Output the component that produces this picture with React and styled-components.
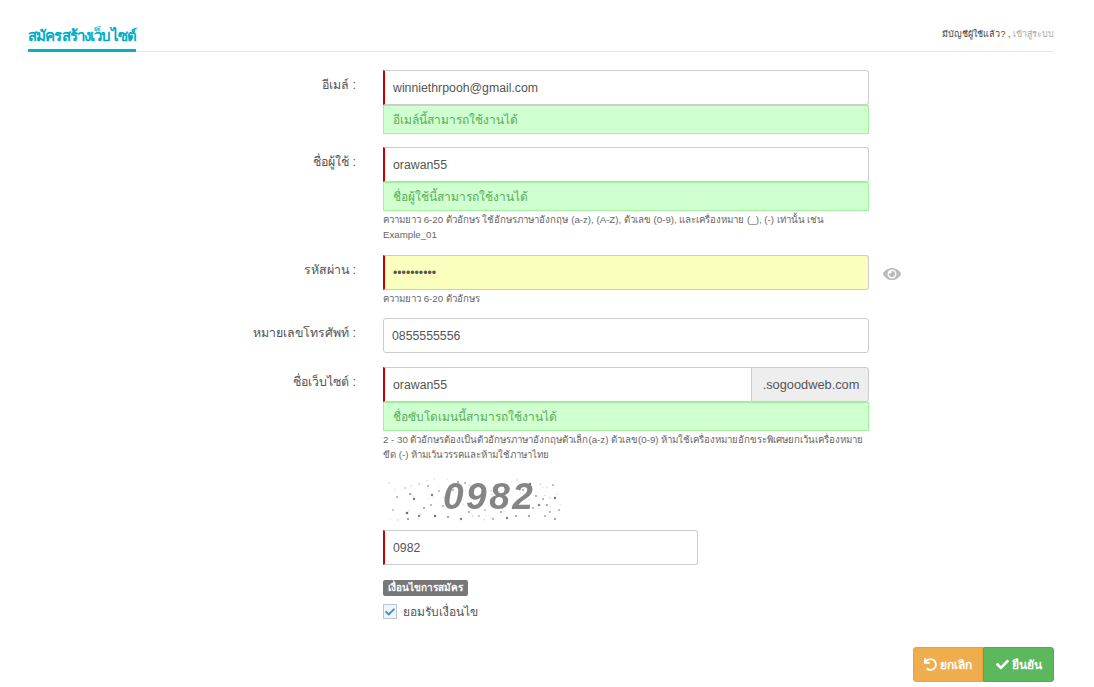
import React from "react";
import styled, { createGlobalStyle } from "styled-components";
import { FaEye, FaCheck, FaUndo } from "react-icons/fa";

const THAI = `"Liberation Sans", "Noto Sans", "DejaVu Sans", sans-serif`;

const Global = createGlobalStyle`
	* { box-sizing: border-box; }
	html, body { margin: 0; padding: 0; background: #fff; }
	body { font-family: ${THAI}; color: #555; }
`;

const Page = styled.div`
	width: 1094px;
	height: 687px;
	padding: 0 40px 0 28px;
	overflow: hidden;
`;

const Header = styled.div`
	height: 52px;
	display: flex;
	justify-content: space-between;
	align-items: flex-end;
	border-bottom: 1px solid #e6e6e6;
`;

const Title = styled.div`
	height: 31px;
	width: 108px;
	margin-bottom: -1px;
	padding-top: 5px;
	border-bottom: 3px solid #00b3cc;
	color: #00adc8;
	font-size: 15px;
	font-weight: 600;
	letter-spacing: -0.86px;
	line-height: 20px;
	white-space: nowrap;
`;

const LoginHint = styled.div`
	font-size: 9px;
	line-height: 12px;
	margin-bottom: 11px;
	color: #444;
`;

const LoginLink = styled.span`
	color: #a8a8a8;
`;

const Form = styled.div`
	padding-top: 18px;
`;

const Row = styled.div`
	display: grid;
	grid-template-columns: 328px 486px;
	column-gap: 27px;
	margin-bottom: ${(p) => p.$gap ?? 13}px;
`;

const Label = styled.div`
	text-align: right;
	font-size: 12.4px;
	line-height: 16px;
	padding-top: 7px;
	color: #555;
`;

const Field = styled.div`
	position: relative;
	display: flex;
	flex-direction: column;
`;

const InputGroup = styled.div`
	display: flex;
	width: ${(p) => p.$width ?? 486}px;
	height: 35px;
`;

const Input = styled.div`
	flex: 1;
	height: 35px;
	padding: 0 8px;
	display: flex;
	align-items: center;
	font-size: 12.3px;
	color: #555;
	background: ${(p) => (p.$yellow ? "#faffbd" : "#fff")};
	border: 1px solid #ccc;
	border-left: ${(p) => (p.$required ? "2px solid #c80000" : "1px solid #ccc")};
	border-radius: ${(p) => (p.$addon ? "0" : "0 3px 3px 0")};
	border-top-left-radius: ${(p) => (p.$required ? "0" : "3px")};
	border-bottom-left-radius: ${(p) => (p.$required ? "0" : "3px")};
	border-right-width: ${(p) => (p.$addon ? 0 : 1)}px;
`;

const Addon = styled.div`
	width: 118px;
	height: 35px;
	padding-left: 2px;
	display: flex;
	align-items: center;
	justify-content: center;
	font-size: 12.8px;
	color: #555;
	background: #eee;
	border: 1px solid #ccc;
	border-radius: 0 3px 3px 0;
`;

const Success = styled.div`
	height: 29px;
	padding: 0 9px;
	display: flex;
	align-items: center;
	font-size: 12px;
	color: #5aad5a;
	background: #d0ffd0;
	border: 1px solid #a0f0a0;
`;

const Help = styled.div`
	margin-top: ${(p) => p.$top ?? 1}px;
	font-size: 9.7px;
	line-height: 15px;
	color: #666;
`;

const EyeButton = styled.div`
	position: absolute;
	left: 500px;
	top: 10px;
	color: #bbb;
	font-size: 18px;
	line-height: 0;
`;

const Captcha = styled.svg`
	display: block;
	width: 180px;
	height: 50px;
	margin-top: 10px;
	margin-bottom: 8px;
	filter: blur(0.6px);
`;

const Badge = styled.div`
	align-self: flex-start;
	height: 16px;
	margin-top: 15px;
	padding: 0 5px;
	border-radius: 2px;
	background: #777;
	color: #fff;
	font-size: 10px;
	font-weight: 700;
	line-height: 16px;
`;

const CheckRow = styled.div`
	display: flex;
	align-items: center;
	gap: 6px;
	margin-top: 6px;
	font-size: 12px;
	color: #555;
`;

const CheckBox = styled.span`
	width: 14px;
	height: 15px;
	display: flex;
	align-items: center;
	justify-content: center;
	background: #f1f4f7;
	border: 1px solid #bcc6d0;
	color: #3f97c9;
	font-size: 10px;
`;

const Actions = styled.div`
	display: flex;
	justify-content: flex-end;
	margin-top: 26px;
`;

const Button = styled.div`
	width: ${(p) => p.$width}px;
	height: 35px;
	display: flex;
	align-items: center;
	justify-content: center;
	gap: 3px;
	font-size: 12px;
	font-weight: 700;
	color: #fff;
	background: ${(p) => p.$bg};
	border: 1px solid ${(p) => p.$border};
	border-radius: ${(p) => p.$radius};

	svg {
		font-size: 13px;
	}
`;

// noise specks for the captcha picture: x, y, radius, grey
const specks = [
	[14, 25, 1, 170], [22, 16, 1, 200], [27, 22, 1, 150], [31, 27, 1.2, 120], [10, 38, 1, 190],
	[24, 41, 1.3, 110], [25, 47, 1, 140], [36, 44, 1.2, 130], [41, 36, 1, 150], [48, 33, 1, 170],
	[45, 14, 1, 160], [49, 23, 1.2, 130], [52, 44, 1.2, 110], [56, 19, 1, 180], [65, 45, 1, 140],
	[70, 18, 1, 170], [75, 10, 1, 150], [82, 11, 1, 170], [88, 20, 1, 190], [78, 47, 1.2, 130],
	[86, 40, 1, 160], [96, 44, 1, 180], [110, 47, 1, 170], [118, 40, 1, 160], [124, 46, 1.2, 130],
	[133, 44, 1, 150], [146, 44, 1, 140], [147, 12, 1.2, 120], [153, 24, 1, 160], [156, 33, 1.2, 130],
	[160, 27, 1, 160], [164, 33, 1, 150], [170, 13, 1, 170], [172, 26, 1.2, 120], [176, 38, 1, 170],
	[162, 44, 1, 160], [172, 47, 1, 140], [122, 23, 1, 190], [113, 13, 1, 190], [140, 18, 1, 170],
	[60, 34, 1, 170], [36, 12, 1, 210], [167, 40, 1, 170], [150, 36, 1, 170], [102, 38, 1, 190],
];

// fainter grain spread over the same area, scattered with a small seeded generator
let seed = 41;
const next = () => {
	seed = (seed * 1103515245 + 12345) % 2147483648;
	return seed / 2147483648;
};
const grain = Array.from({ length: 80 }, () => [
	3 + next() * 175,
	6 + next() * 42,
	0.7,
	195 + Math.floor(next() * 45),
]);

export default function App() {
	return (
		<Page>
			<Global />
			<Header>
				<Title>สมัครสร้างเว็บไซต์</Title>
				<LoginHint>
					มีบัญชีผู้ใช้แล้ว? , <LoginLink>เข้าสู่ระบบ</LoginLink>
				</LoginHint>
			</Header>
			<Form>
				<Row>
					<Label>อีเมล์ :</Label>
					<Field>
						<InputGroup>
							<Input $required>winniethrpooh@gmail.com</Input>
						</InputGroup>
						<Success>อีเมล์นี้สามารถใช้งานได้</Success>
					</Field>
				</Row>
				<Row>
					<Label>ชื่อผู้ใช้ :</Label>
					<Field>
						<InputGroup>
							<Input $required>orawan55</Input>
						</InputGroup>
						<Success>ชื่อผู้ใช้นี้สามารถใช้งานได้</Success>
						<Help>
							ความยาว 6-20 ตัวอักษร ใช้อักษรภาษาอังกฤษ (a-z), (A-Z), ตัวเลข (0-9), และเครื่องหมาย (_), (-) เท่านั้น เช่น
							<br />
							Example_01
						</Help>
					</Field>
				</Row>
				<Row $gap={12}>
					<Label>รหัสผ่าน :</Label>
					<Field>
						<InputGroup>
							<Input $required $yellow>••••••••••</Input>
						</InputGroup>
						<EyeButton><FaEye /></EyeButton>
						<Help>ความยาว 6-20 ตัวอักษร</Help>
					</Field>
				</Row>
				<Row $gap={14}>
					<Label>หมายเลขโทรศัพท์ :</Label>
					<Field>
						<InputGroup>
							<Input>0855555556</Input>
						</InputGroup>
					</Field>
				</Row>
				<Row $gap={0}>
					<Label>ชื่อเว็บไซต์ :</Label>
					<Field>
						<InputGroup>
							<Input $required $addon>orawan55</Input>
							<Addon>.sogoodweb.com</Addon>
						</InputGroup>
						<Success>ชื่อซับโดเมนนี้สามารถใช้งานได้</Success>
						<Help>
							2 - 30 ตัวอักษรต้องเป็นตัวอักษรภาษาอังกฤษตัวเล็ก(a-z) ตัวเลข(0-9) ห้ามใช้เครื่องหมายอักขระพิเศษยกเว้นเครื่องหมาย
							<br />
							ขีด (-) ห้ามเว้นวรรคและห้ามใช้ภาษาไทย
						</Help>
						<Captcha viewBox="0 0 180 50">
							{grain.concat(specks).map(([x, y, r, g], i) => (
								<circle key={i} cx={x} cy={y} r={r} fill={`rgb(${g},${g},${g})`} />
							))}
							<text
								x="60"
								y="37"
								fontFamily="Liberation Sans"
								fontSize="37"
								fontWeight="700"
								fontStyle="italic"
								fill="#858585"
								letterSpacing="2.5"
							>
								0982
							</text>
						</Captcha>
						<InputGroup $width={315}>
							<Input $required>0982</Input>
						</InputGroup>
						<Badge>เงื่อนไขการสมัคร</Badge>
						<CheckRow>
							<CheckBox><FaCheck /></CheckBox>
							ยอมรับเงื่อนไข
						</CheckRow>
					</Field>
				</Row>
				<Actions>
					<Button $width={70} $bg="#f0ad4e" $border="#eea236" $radius="3px 0 0 3px">
						<FaUndo /> ยกเลิก
					</Button>
					<Button $width={71} $bg="#5cb85c" $border="#4cae4c" $radius="0 3px 3px 0">
						<FaCheck /> ยืนยัน
					</Button>
				</Actions>
			</Form>
		</Page>
	);
}
